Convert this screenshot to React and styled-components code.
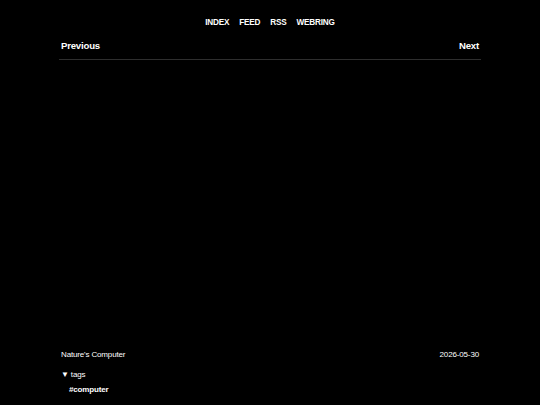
import styled, { createGlobalStyle } from "styled-components";

const Global = createGlobalStyle`
  html, body {
    margin: 0;
    background: #000;
    color: #fff;
    font-family: "Liberation Sans", Arial, sans-serif;
  }
`;

const Page = styled.div`
  width: 422px;
  margin: 0 auto;
  height: 405px;
  display: flex;
  flex-direction: column;
`;

const Nav = styled.nav`
  display: flex;
  justify-content: center;
  gap: 10px;
  padding-top: 17px;
  font-size: 8.2px;
  letter-spacing: -0.2px;
  font-weight: bold;
  line-height: 11px;
`;

const NavLink = styled.a`
  color: #fff;
  text-decoration: none;
`;

const Pager = styled.div`
  display: flex;
  justify-content: space-between;
  margin-top: 12px;
  padding: 0 2px 7px;
  border-bottom: 1px solid #2e2e2e;
  font-size: 9.6px;
  letter-spacing: -0.2px;
  font-weight: bold;
  line-height: 12px;
`;

const Content = styled.main`
  flex: 1;
`;

const Footer = styled.footer`
  padding: 0 2px 10px;
  font-size: 8px;
  letter-spacing: -0.15px;
  line-height: 11px;
`;

const Meta = styled.div`
  display: flex;
  justify-content: space-between;
`;

const Tags = styled.details`
  margin-top: 9px;
  summary {
    list-style: none;
    cursor: pointer;
  }
  summary::-webkit-details-marker {
    display: none;
  }
`;

const Tag = styled.div`
  margin: 4px 0 0 8px;
  font-weight: bold;
`;

export default function App() {
  return (
    <>
      <Global />
      <Page>
        <Nav>
          <NavLink href="#">INDEX</NavLink>
          <NavLink href="#">FEED</NavLink>
          <NavLink href="#">RSS</NavLink>
          <NavLink href="#">WEBRING</NavLink>
        </Nav>
        <Pager>
          <span>Previous</span>
          <span>Next</span>
        </Pager>
        <Content />
        <Footer>
          <Meta>
            <span>Nature's Computer</span>
            <span>2026-05-30</span>
          </Meta>
          <Tags open>
            <summary>▼ tags</summary>
            <Tag>#computer</Tag>
          </Tags>
        </Footer>
      </Page>
    </>
  );
}
